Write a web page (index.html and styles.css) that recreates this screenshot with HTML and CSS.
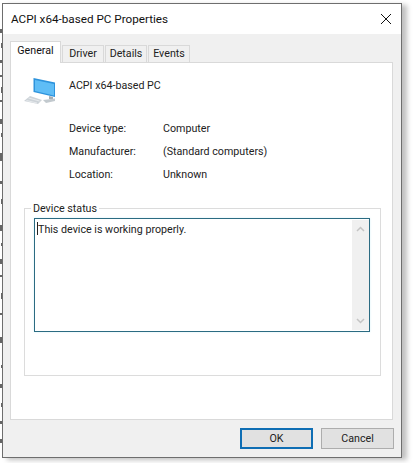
FILE: index.html
```html
<!DOCTYPE html>
<html lang="en">
<head>
    <meta charset="UTF-8">
    <meta name="viewport" content="width=device-width, initial-scale=1.0">
    <title>ACPI x64-based PC Properties</title>
    <link rel="stylesheet" href="styles.css">
</head>
<body>
    <div class="desktop">
        <!-- bits of the page behind the dialog -->
        <svg class="behind" width="2" height="455" viewBox="0 0 2 455">
            <path d="M0 26h2v4h-2z M1 40h1v5h-1z M0 57h2v3h-2z M0 72h2v2h-2z M1 84h1v6h-1z M0 97h2v2h-2z M0 116h2v5h-2z M1 130h1v4h-1z M0 150h2v8h-2z M0 178h2v3h-2z M1 196h1v5h-1z M0 222h2v6h-2z M1 240h1v3h-1z M0 256h2v5h-2z M0 272h2v2h-2z M1 290h1v6h-1z M0 310h2v2h-2z M0 334h2v6h-2z M1 362h1v3h-1z M0 381h2v4h-2z M1 400h1v4h-1z M0 418h2v3h-2z M0 436h2v4h-2z" fill="#666"/>
        </svg>
        <div class="window">
            <div class="title-bar">
                <span class="title">ACPI x64-based PC Properties</span>
                <svg class="close-icon" width="12" height="12" viewBox="0 0 12 12">
                    <path d="M1 1 L11 11 M11 1 L1 11" stroke="#111" stroke-width="1" fill="none"/>
                </svg>
            </div>
            <div class="dialog-body">
                <div class="tabs">
                    <div class="tab active">General</div>
                    <div class="tab">Driver</div>
                    <div class="tab">Details</div>
                    <div class="tab">Events</div>
                </div>
                <div class="panel">
                    <div class="device-head">
                        <svg class="device-icon" width="34" height="32" viewBox="0 0 34 32">
                            <polygon points="9.5,2 31,6.5 31,21 9.5,16" fill="#2e93dc"/>
                            <polygon points="11,4 30,8 30,19.5 11,15" fill="#5fbdf6"/>
                            <polygon points="25,20 29,21 29,23 25,23" fill="#a5adb3"/>
                            <polygon points="19,24 31,22.5 31,25 22,27" fill="#c2c9ce"/>
                            <polygon points="6,20 18,24 14,28 0,25" fill="#cdd3d8"/>
                            <path d="M4.5 22 L15.5 25 M2.5 24.5 L13 27" stroke="#eef0f2" stroke-width="0.8"/>
                        </svg>
                        <span class="device-name">ACPI x64-based PC</span>
                    </div>
                    <div class="props">
                        <span>Device type:</span><span>Computer</span>
                        <span>Manufacturer:</span><span>(Standard computers)</span>
                        <span>Location:</span><span>Unknown</span>
                    </div>
                    <fieldset class="status-group">
                        <legend>Device status</legend>
                        <div class="status-box">
                            <div class="status-text"><span class="caret"></span>This device is working properly.</div>
                            <div class="scrollbar">
                                <svg width="9" height="6" viewBox="0 0 9 6"><path d="M1 5 L4.5 1.5 L8 5" stroke="#c4c4c4" stroke-width="1.5" fill="none"/></svg>
                                <svg width="9" height="6" viewBox="0 0 9 6"><path d="M1 1 L4.5 4.5 L8 1" stroke="#c4c4c4" stroke-width="1.5" fill="none"/></svg>
                            </div>
                        </div>
                    </fieldset>
                </div>
                <div class="buttons">
                    <div class="btn default">OK</div>
                    <div class="btn">Cancel</div>
                </div>
            </div>
        </div>
    </div>
</body>
</html>
```

FILE: styles.css
```css
html, body {
    margin: 0;
    height: 463px;
    overflow: hidden;
    background-color: #fff;
    font-family: Roboto, "Noto Sans", Arial, sans-serif;
    font-size: 10.7px;
    color: #222;
}

body {
    padding-top: 3px;
    box-sizing: border-box;
}

.desktop {
    display: flex;
    align-items: flex-start;
}

.behind {
    flex: none;
}

.window {
    width: 400px;
    height: 455px;
    box-sizing: border-box;
    border: 1px solid #6e6e6e;
    display: flex;
    flex-direction: column;
    box-shadow: 5px 2px 5px rgba(0,0,0,0.25);
}

.title-bar {
    height: 30px;
    flex: none;
    background-color: #fff;
    display: flex;
    align-items: center;
    justify-content: space-between;
    padding: 0 9px 0 8px;
}

.title {
    font-size: 11.7px;
    color: #111;
}

.dialog-body {
    flex: 1;
    background-color: #f0f0f0;
    padding: 7px 8px 0 7px;
    display: flex;
    flex-direction: column;
}

.tabs {
    display: flex;
    height: 21px;
    align-items: flex-end;
    flex: none;
    position: relative;
    z-index: 1;
}

.tab {
    height: 17px;
    line-height: 16px;
    width: 42px;
    margin-right: 1px;
    background-color: #f0f0f0;
    border: 1px solid #d9d9d9;
    border-bottom: 0;
    box-sizing: border-box;
    text-align: center;
}

.tab.active {
    height: 22px;
    margin-bottom: -1px;
    width: 51px;
    background-color: #fff;
    line-height: 18px;
    color: #111;
}

.panel {
    height: 358px;
    flex: none;
    box-sizing: border-box;
    background-color: #fff;
    border: 1px solid #d9d9d9;
    padding: 0 11px 0 13px;
}

.device-head {
    display: flex;
    align-items: flex-start;
    height: 54px;
    padding-top: 12px;
    box-sizing: border-box;
}

.device-icon {
    margin-top: 1px;
    flex: none;
}

.device-name {
    margin-left: 11px;
    margin-top: 4px;
}

.props {
    display: grid;
    grid-template-columns: 94px 1fr;
    grid-auto-rows: 23px;
    align-items: center;
    padding-left: 45px;
}

.status-group {
    margin: 16px 0 0 0;
    padding: 3px 10px 0 9px;
    border: 1px solid #dcdcdc;
    height: 174px;
    box-sizing: border-box;
}

.status-group legend {
    padding: 0 2px;
    margin-left: -3px;
    color: #222;
}

.status-box {
    height: 114px;
    box-sizing: border-box;
    border: 1px solid #2b6b82;
    box-shadow: 0 0 2px #d5f1f7;
    display: flex;
    background-color: #fff;
}

.status-text {
    flex: 1;
    padding: 2px 2px 0;
    line-height: 17px;
}

.caret {
    display: inline-block;
    width: 1px;
    height: 13px;
    background-color: #222;
    vertical-align: -2px;
}

.scrollbar {
    width: 17px;
    margin: 1px 0;
    background-color: #f0f0f0;
    display: flex;
    flex-direction: column;
    justify-content: space-between;
    align-items: center;
    padding: 6px 0;
    box-sizing: border-box;
}

.buttons {
    display: flex;
    justify-content: flex-end;
    gap: 8px;
    margin-top: 8px;
    margin-right: -1px;
}

.btn {
    width: 73px;
    height: 21px;
    box-sizing: border-box;
    border: 1px solid #adadad;
    background-color: #e1e1e1;
    text-align: center;
    line-height: 19px;
    color: #222;
}

.btn.default {
    border: 2px solid #0f6eb4;
    line-height: 17px;
}
```
